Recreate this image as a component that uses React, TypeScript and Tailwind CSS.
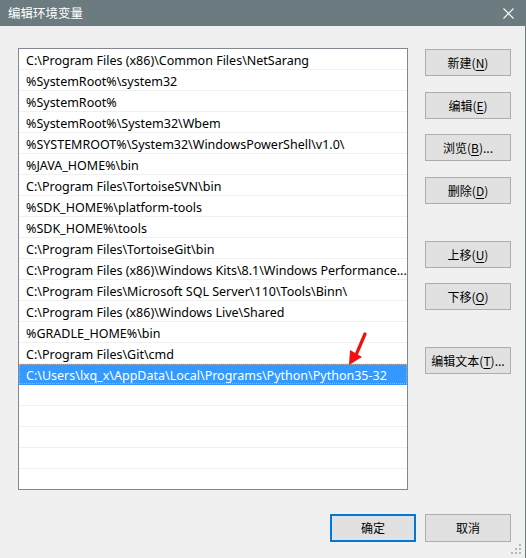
import React from 'react';

// 列表里显示的路径 (过长的一项已按列宽截断)
const paths = [
  'C:\\Program Files (x86)\\Common Files\\NetSarang',
  '%SystemRoot%\\system32',
  '%SystemRoot%',
  '%SystemRoot%\\System32\\Wbem',
  '%SYSTEMROOT%\\System32\\WindowsPowerShell\\v1.0\\',
  '%JAVA_HOME%\\bin',
  'C:\\Program Files\\TortoiseSVN\\bin',
  '%SDK_HOME%\\platform-tools',
  '%SDK_HOME%\\tools',
  'C:\\Program Files\\TortoiseGit\\bin',
  'C:\\Program Files (x86)\\Windows Kits\\8.1\\Windows Performance...',
  'C:\\Program Files\\Microsoft SQL Server\\110\\Tools\\Binn\\',
  'C:\\Program Files (x86)\\Windows Live\\Shared',
  '%GRADLE_HOME%\\bin',
  'C:\\Program Files\\Git\\cmd',
  'C:\\Users\\lxq_x\\AppData\\Local\\Programs\\Python\\Python35-32',
];

const selectedIndex = 15;
const emptyRows = 6;

const font = { fontFamily: '"Noto Sans", "Noto Sans CJK SC", sans-serif' };
const cjk = { fontFamily: '"Noto Sans CJK SC", sans-serif' };

// 按钮文字: 标签 + 带下划线的快捷键
const WinButton: React.FC<{
  label: string;
  accel?: string;
  tail?: string;
  className?: string;
  primary?: boolean;
}> = ({ label, accel, tail = '', className = '', primary }) => (
  <div
    className={`w-[86px] h-[27px] flex items-center justify-center bg-[#e1e1e1] text-[12px] text-black leading-none ${
      primary ? 'border-2 border-[#0078d7]' : 'border border-[#adadad]'
    } ${className}`}
  >
    <span>
      {label}
      {accel && (
        <>
          (<span className="underline underline-offset-2">{accel}</span>){tail}
        </>
      )}
    </span>
  </div>
);

const App: React.FC = () => {
  return (
    <div className="relative w-[526px] h-[558px] bg-[#f0f0f0] border-r border-[#6a7a7e] overflow-hidden" style={font}>
      {/* 标题栏 */}
      <div className="h-[26px] bg-[#6b7b7f] flex items-center justify-between pl-[8px] pr-[10px]">
        <span className="text-white text-[12.5px] leading-none" style={cjk}>
          编辑环境变量
        </span>
        <svg width="11" height="11" viewBox="0 0 11 11" className="mr-[1px]">
          <path d="M0.5 0.5 L10.5 10.5 M10.5 0.5 L0.5 10.5" stroke="#fff" strokeWidth="1.1" />
        </svg>
      </div>

      <div className="flex pl-[18px] pt-[22px]">
        {/* 路径列表 */}
        <div className="w-[390px] h-[442px] border border-[#828790] bg-white overflow-hidden">
          {paths.map((p, i) => {
            const sel = i === selectedIndex;
            return (
              <div
                key={i}
                className={`h-[21px] border-b ${
                  sel ? 'border-[#3399ff] bg-[#3399ff]' : 'border-[#f0f0f0]'
                }`}
              >
                <div
                  className={`h-[20px] pl-[7px] pr-[3px] pt-[3px] text-[12.5px] leading-[17px] whitespace-nowrap ${
                    sel ? 'text-white outline outline-1 outline-dotted outline-[#f0a050] -outline-offset-1' : 'text-black'
                  }`}
                >
                  {p}
                </div>
              </div>
            );
          })}
          {Array.from({ length: emptyRows }).map((_, i) => (
            <div key={`e${i}`} className="h-[21px] border-b border-[#f0f0f0]" />
          ))}
        </div>

        {/* 右侧按钮 */}
        <div className="flex flex-col ml-[17px] pt-[1px]" style={cjk}>
          <WinButton label="新建" accel="N" />
          <WinButton label="编辑" accel="E" className="mt-[16px]" />
          <WinButton label="浏览" accel="B" tail="..." className="mt-[15px]" />
          <WinButton label="删除" accel="D" className="mt-[16px]" />
          <WinButton label="上移" accel="U" className="mt-[37px]" />
          <WinButton label="下移" accel="O" className="mt-[15px]" />
          <WinButton label="编辑文本" accel="T" tail="..." className="mt-[37px]" />
        </div>
      </div>

      {/* 底部按钮 */}
      <div className="flex justify-end gap-[9px] pr-[14px] pt-[24px]" style={cjk}>
        <WinButton label="确定" primary className="h-[28px]" />
        <WinButton label="取消" className="h-[28px]" />
      </div>

      {/* 红色箭头 */}
      <svg className="absolute left-[340px] top-[328px]" width="34" height="40" viewBox="0 0 34 40">
        <path d="M25 6 L16 27" stroke="#f01010" strokeWidth="3.2" strokeLinecap="round" />
        <path d="M9 37 L10 22 L22 29 Z" fill="#f01010" />
      </svg>

      {/* 尺寸调整手柄 */}
      <svg className="absolute right-[3px] bottom-[3px]" width="11" height="11" viewBox="0 0 11 11">
        {[
          [8, 0],
          [4, 4],
          [8, 4],
          [0, 8],
          [4, 8],
          [8, 8],
        ].map(([x, y], i) => (
          <rect key={i} x={x} y={y} width="2" height="2" fill="#b8b8b8" />
        ))}
      </svg>
    </div>
  );
};

export default App;
